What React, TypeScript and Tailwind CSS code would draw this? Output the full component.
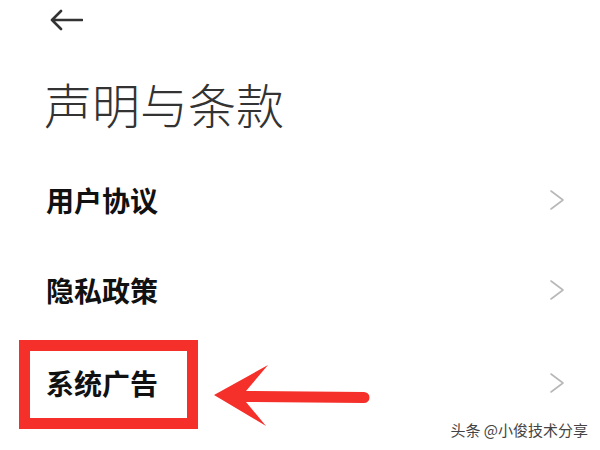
import React from "react";

const Chevron = () => (
  <svg width="16" height="22" viewBox="0 0 16 22" className="shrink-0">
    <polyline points="2,2 14,11 2,20" fill="none" stroke="#b8b8b8" strokeWidth="1.6" strokeLinecap="round" strokeLinejoin="round" />
  </svg>
);

const Row = ({ label, h }: { label: string; h: string }) => (
  <div className={`flex items-center justify-between pl-[46px] pr-[35px] ${h}`}>
    <span className="text-[28px] leading-[28px] font-semibold text-[#111]">{label}</span>
    <Chevron />
  </div>
);

export default function App() {
  return (
    <div
      className="relative w-[600px] h-[450px] bg-white overflow-hidden"
      style={{ fontFamily: '"Noto Sans CJK SC", "Noto Sans", sans-serif' }}
    >
      <div className="h-[40px] flex items-center pl-[49px]">
        <svg width="34" height="22" viewBox="0 0 34 22">
          <path d="M33 11 H3 M12 2 L3 11 L12 20" fill="none" stroke="#333" strokeWidth="2.6" strokeLinecap="round" strokeLinejoin="round" />
        </svg>
      </div>
      <div className="mt-[39px] pl-[44px] text-[48px] leading-[48px] font-light text-[#333]">
        声明与条款
      </div>
      <div className="mt-[28px] flex flex-col">
        <Row label="用户协议" h="h-[90px]" />
        <Row label="隐私政策" h="h-[90px]" />
        <Row label="系统广告" h="h-[96px]" />
      </div>

      <div className="absolute left-[19px] top-[340px] w-[179px] h-[89px] border-[11px] border-[#f5302a]" />

      <svg className="absolute left-0 top-0" width="600" height="450" viewBox="0 0 600 450">
        <path
          d="M214 395 L268 365 L246 391 L364 392 A5.5 5.5 0 0 1 364 403 L246 402 L266 426 Z"
          fill="#f5302a"
        />
      </svg>

      <div
        className="absolute right-[12px] top-[421px] text-[15px] leading-[18px] text-[#444]"
        style={{ textShadow: "0 0 2px #fff" }}
      >
        头条 @小俊技术分享
      </div>
    </div>
  );
}
